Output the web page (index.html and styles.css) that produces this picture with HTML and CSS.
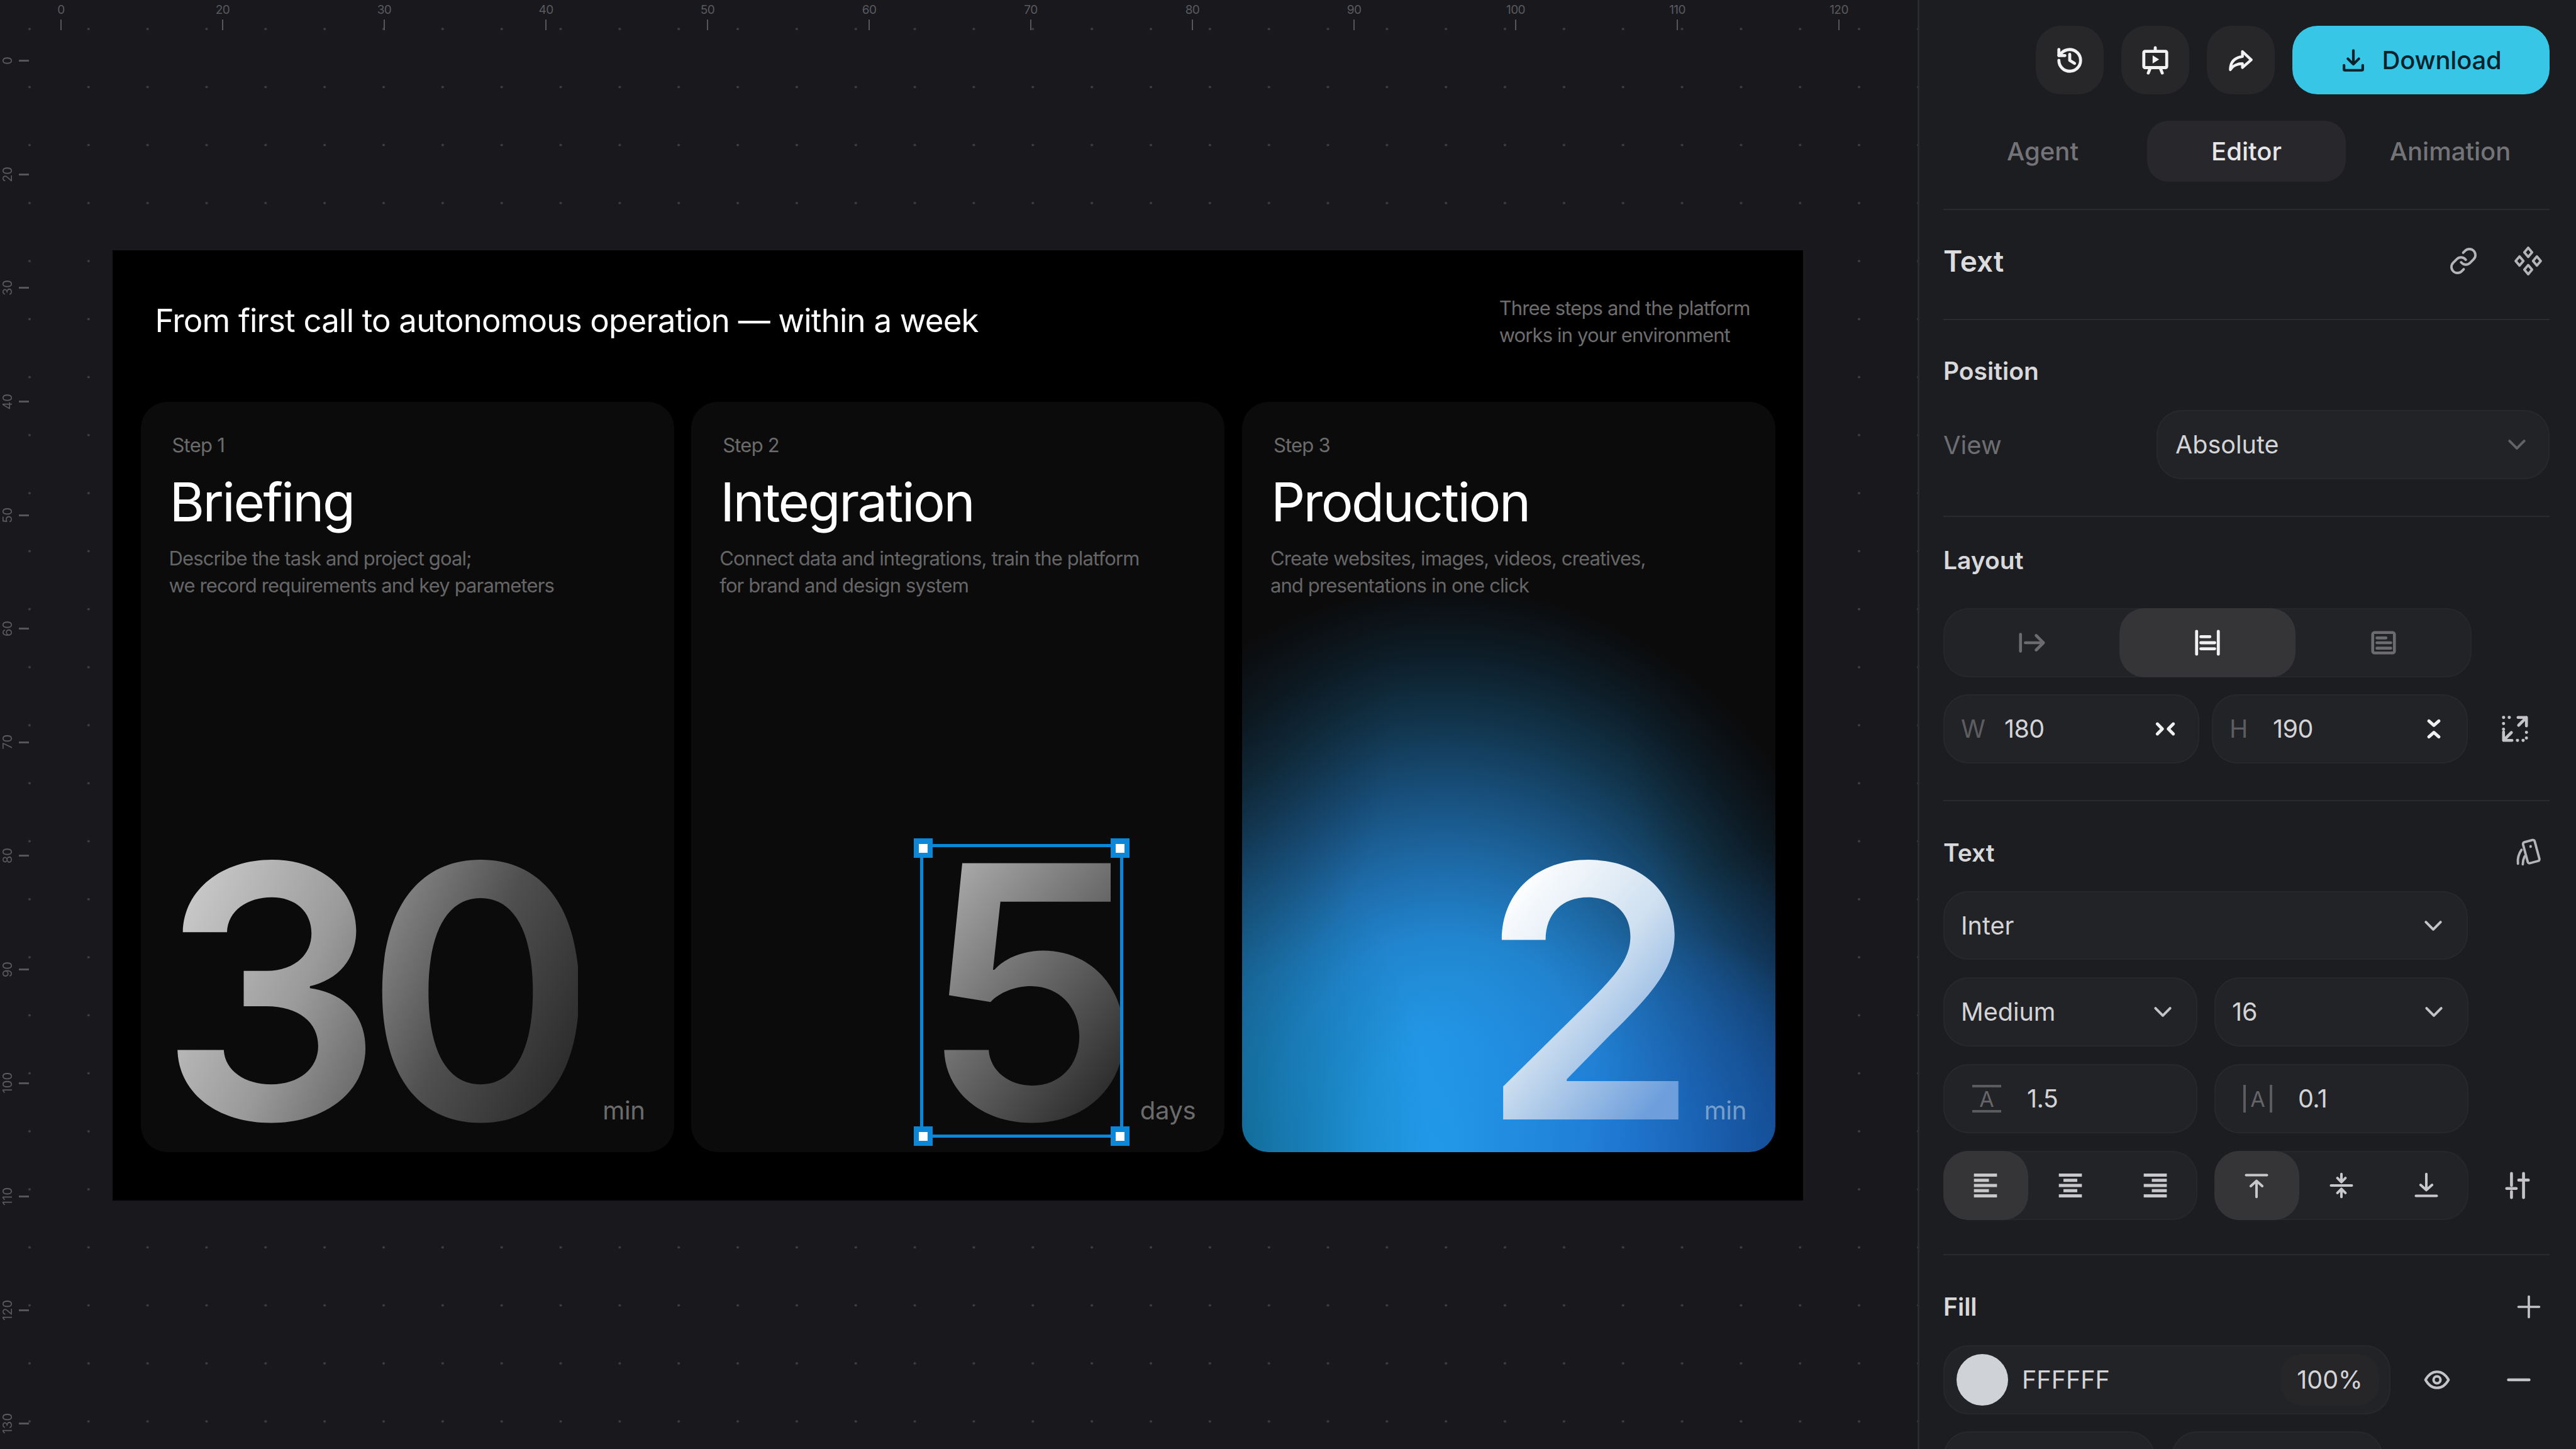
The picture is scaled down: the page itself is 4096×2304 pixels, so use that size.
FILE: index.html
```html
<!DOCTYPE html>
<html lang="en">
<head>
  <meta charset="UTF-8" />
  <title>Slide editor</title>
  <link rel="stylesheet" href="styles.css">
</head>
<body>
  <svg class="defs" width="0" height="0">
    <symbol id="chev" viewBox="0 0 24 24"><path d="M5 8.500l7 7 7-7"/></symbol>
  </svg>
  <div class="app">
    <main class="canvas">
      <div class="ruler-top">
        <span class="rt"><b>0</b><i></i></span>
        <span class="rt"><b>20</b><i></i></span>
        <span class="rt"><b>30</b><i></i></span>
        <span class="rt"><b>40</b><i></i></span>
        <span class="rt"><b>50</b><i></i></span>
        <span class="rt"><b>60</b><i></i></span>
        <span class="rt"><b>70</b><i></i></span>
        <span class="rt"><b>80</b><i></i></span>
        <span class="rt"><b>90</b><i></i></span>
        <span class="rt"><b>100</b><i></i></span>
        <span class="rt"><b>110</b><i></i></span>
        <span class="rt"><b>120</b><i></i></span>
      </div>
      <div class="ruler-left">
        <span class="rl"><b>0</b><i></i></span>
        <span class="rl"><b>20</b><i></i></span>
        <span class="rl"><b>30</b><i></i></span>
        <span class="rl"><b>40</b><i></i></span>
        <span class="rl"><b>50</b><i></i></span>
        <span class="rl"><b>60</b><i></i></span>
        <span class="rl"><b>70</b><i></i></span>
        <span class="rl"><b>80</b><i></i></span>
        <span class="rl"><b>90</b><i></i></span>
        <span class="rl"><b>100</b><i></i></span>
        <span class="rl"><b>110</b><i></i></span>
        <span class="rl"><b>120</b><i></i></span>
        <span class="rl"><b>130</b><i></i></span>
        <span class="rl"><b></b><i></i></span>
      </div>

      <section class="slide">
        <header class="slide-head">
          <h1>From first call to autonomous operation — within a week</h1>
          <p>Three steps and the platform<br>works in your environment</p>
        </header>
        <div class="cards">
          <article class="card">
            <div class="step">Step 1</div>
            <h2>Briefing</h2>
            <p class="desc">Describe the task and project goal;<br>we record requirements and key parameters</p>
            <div class="foot">
              <span class="big big-30">30</span>
              <span class="unit">min</span>
            </div>
          </article>
          <article class="card">
            <div class="step">Step 2</div>
            <h2>Integration</h2>
            <p class="desc">Connect data and integrations, train the platform<br>for brand and design system</p>
            <div class="foot">
              <span class="big big-5">5<span class="sel"><u class="h tl"></u><u class="h tr"></u><u class="h bl"></u><u class="h br"></u></span></span>
              <span class="unit">days</span>
            </div>
          </article>
          <article class="card card-blue">
            <div class="step">Step 3</div>
            <h2>Production</h2>
            <p class="desc">Create websites, images, videos, creatives,<br>and presentations in one click</p>
            <div class="foot">
              <span class="big big-2">2</span>
              <span class="unit">min</span>
            </div>
          </article>
        </div>
      </section>
    </main>

    <aside class="panel">
      <div class="topbar">
        <button class="icon-btn"><svg class="ico ico-w" viewBox="0 0 24 24"><path d="M3 12a9 9 0 1 0 9-9 9.750 9.750 0 0 0-6.740 2.740L3 8"/><path d="M3 3v5h5"/><path d="M12 7v5l4 2.500"/></svg></button>
        <button class="icon-btn"><svg class="ico ico-w" viewBox="0 0 24 24"><rect x="2.500" y="4.500" width="19" height="13.500" rx="1"/><path d="M12 1.500v3M8 18l-1.800 4.500M16 18l1.800 4.500"/><path class="solid" d="M9.800 7.800l5.400 3.400-5.400 3.400z"/></svg></button>
        <button class="icon-btn"><svg class="ico ico-w ico-sm" viewBox="0 0 24 24"><path d="M13.500 4l8 7.500-8 7V15c-5 0-8.500 1.500-11 5.500 0-7 3.500-11 11-12z"/></svg></button>
        <button class="download"><svg class="ico ico-d" viewBox="0 0 24 24"><path d="M12 3v12M7 10.500l5 5 5-5M3.500 16.500V20a1 1 0 0 0 1 1h15a1 1 0 0 0 1-1v-3.500"/></svg>Download</button>
      </div>

      <nav class="tabs">
        <span class="tab">Agent</span>
        <span class="tab active">Editor</span>
        <span class="tab">Animation</span>
      </nav>

      <section class="sec sec-title">
        <div class="sec-row">
          <h3 class="big-label">Text</h3>
          <div class="sec-icons">
            <svg class="ico ico-l" viewBox="0 0 24 24"><path d="M10 13a5 5 0 0 0 7.540.540l3-3a5 5 0 0 0-7.070-7.070l-1.720 1.710"/><path d="M14 11a5 5 0 0 0-7.540-.540l-3 3a5 5 0 0 0 7.070 7.070l1.710-1.710"/></svg>
            <svg class="ico ico-l" viewBox="0 0 24 24"><path d="M12 1l3.200 3.800L12 8.600 8.800 4.800zM12 15.400l3.200 3.800L12 23l-3.200-3.800zM4.800 8.200L8 12l-3.200 3.800L1.600 12zM19.200 8.200l3.200 3.800-3.200 3.800L16 12z"/></svg>
          </div>
        </div>
      </section>

      <section class="sec sec-pos">
        <h3 class="label">Position</h3>
        <div class="view-row">
          <span class="muted">View</span>
          <div class="pill pill-view"><span>Absolute</span><svg class="ico chev chev-dim"><use href="#chev"/></svg></div>
        </div>
      </section>

      <section class="sec sec-layout">
        <h3 class="label">Layout</h3>
        <div class="seg seg-layout">
          <span class="seg-item"><svg class="ico ico-g" viewBox="0 0 24 24"><path d="M3 5v14M7 12h15M16 6l6 6-6 6"/></svg></span>
          <span class="seg-item on"><svg class="ico ico-w" viewBox="0 0 24 24"><path d="M3 2.500v19M21 2.500v19M6.500 7H14M6.500 12H18M6.500 17H18"/></svg></span>
          <span class="seg-item"><svg class="ico ico-g" viewBox="0 0 24 24"><rect x="3" y="3.500" width="18" height="17" rx="1.500"/><path d="M6.500 8H14M6.500 12H18M6.500 16.500H18"/></svg></span>
        </div>
        <div class="row row-wh">
          <div class="pill pill-num">
            <span class="pre">W</span><span class="val">180</span>
            <svg class="ico ico-s" viewBox="0 0 24 24"><path d="M4 7l5 5-5 5M20 7l-5 5 5 5"/></svg>
          </div>
          <div class="pill pill-num">
            <span class="pre">H</span><span class="val">190</span>
            <svg class="ico ico-s" viewBox="0 0 24 24"><path d="M7 4l5 4.500 5-4.500M7 20l5-4.500 5 4.500"/></svg>
          </div>
          <svg class="ico ico-x" viewBox="0 0 24 24"><path class="dots" d="M2.500 2.500h9M2.500 7.500v7M14 21.500h7.500V13"/><path d="M14.500 2.500h7v7M21.500 2.500L15 9M9.500 21.500h-7v-7M2.500 21.500L9 15"/></svg>
        </div>
      </section>

      <section class="sec sec-text">
        <div class="sec-row">
          <h3 class="label">Text</h3>
          <svg class="ico ico-l ico-rot" viewBox="0 0 24 24"><rect x="9.500" y="2" width="10" height="18" rx="1.500" transform="rotate(-15 14.500 11)"/><path d="M14 6.500v.5"/><path d="M6.500 9.500C4 13 3 17 3.500 21M9 15c-1 2-1.500 4-1.500 6.500"/></svg>
        </div>
        <div class="pill pill-font"><span>Inter</span><svg class="ico chev"><use href="#chev"/></svg></div>
        <div class="row row-two">
          <div class="pill pill-half"><span>Medium</span><svg class="ico chev"><use href="#chev"/></svg></div>
          <div class="pill pill-half"><span>16</span><svg class="ico chev"><use href="#chev"/></svg></div>
        </div>
        <div class="row row-two">
          <div class="pill pill-half pill-metric"><span class="a a-lines">A</span><span class="val">1.5</span></div>
          <div class="pill pill-half pill-metric"><span class="a a-sides">A</span><span class="val">0.1</span></div>
        </div>
        <div class="row row-two">
          <div class="seg seg-half">
            <span class="seg-item on"><svg class="ico ico-a" viewBox="0 0 24 24"><path class="thick" d="M2 3h20M2 7.500h13M2 12h20M2 16.500h13M2 21h20"/></svg></span>
            <span class="seg-item"><svg class="ico ico-a" viewBox="0 0 24 24"><path class="thick" d="M2 3h20M6 7.500h12M2 12h20M6 16.500h12M2 21h20"/></svg></span>
            <span class="seg-item"><svg class="ico ico-a" viewBox="0 0 24 24"><path class="thick" d="M2 3h20M9 7.500h13M2 12h20M9 16.500h13M2 21h20"/></svg></span>
          </div>
          <div class="seg seg-half">
            <span class="seg-item on"><svg class="ico ico-a" viewBox="0 0 24 24"><path d="M3 3h18M12 22V8M7 12.500L12 8l5 4.500"/></svg></span>
            <span class="seg-item"><svg class="ico ico-a" viewBox="0 0 24 24"><path d="M3 12h18M12 2v6M8.500 5.500L12 9l3.500-3.500M12 22v-6M8.500 18.500L12 15l3.500 3.500"/></svg></span>
            <span class="seg-item"><svg class="ico ico-a" viewBox="0 0 24 24"><path d="M3 21h18M12 2v14M7 11.500l5 4.500 5-4.500"/></svg></span>
          </div>
          <svg class="ico ico-x ico-sl" viewBox="0 0 24 24"><path d="M7 2v10M7 17v5M3 14.500h8M17 2v4M17 9v13M13 7.500h8"/></svg>
        </div>
      </section>

      <section class="sec sec-fill">
        <div class="sec-row">
          <h3 class="label">Fill</h3>
          <svg class="ico ico-l ico-plus" viewBox="0 0 24 24"><path d="M12 3v18M3 12h18"/></svg>
        </div>
        <div class="row row-fill">
          <div class="pill pill-color">
            <span class="swatch"></span>
            <span class="hex">FFFFFF</span>
            <span class="pct">100%</span>
          </div>
          <svg class="ico ico-eye" viewBox="0 0 24 24"><path d="M2 12c2.500-4.500 6-7 10-7s7.500 2.500 10 7c-2.500 4.500-6 7-10 7s-7.500-2.500-10-7z"/><circle cx="12" cy="12" r="3"/></svg>
          <svg class="ico ico-minus" viewBox="0 0 24 24"><path d="M3 12h18"/></svg>
        </div>
        <div class="row row-next">
          <div class="pill pill-next"></div>
          <div class="pill pill-next"></div>
        </div>
      </section>
    </aside>
  </div>
</body>
</html>
```
FILE: styles.css
```css
* {
  box-sizing: border-box;
}

html,
body {
  margin: 0;
  height: 100%;
  overflow: hidden;
}

body {
  font-family: Inter, "Liberation Sans", sans-serif;
  background: #18181d;
  color: #e4e4e6;
}

h1, h2, h3, p {
  margin: 0;
  font-weight: 400;
}

.defs {
  position: absolute;
}

.app {
  display: flex;
  width: 4096px;
  height: 2304px;
}

/* canvas */
.canvas {
  position: relative;
  width: 3049px;
  height: 2304px;
  overflow: hidden;
  padding: 398px 0 0 179px;
  background-color: #18181d;
  background-image: radial-gradient(circle at center, #3f3f44 0, #3f3f44 1.6px, transparent 2.2px);
  background-size: 93.85px 92.25px;
}

.ruler-top {
  position: absolute;
  top: 0;
  left: -31.5px;
  display: flex;
}

.rt {
  width: 257px;
  display: flex;
  flex-direction: column;
  align-items: center;
  padding-top: 5px;
}

.rt b {
  font-weight: 400;
  font-size: 19px;
  line-height: 22px;
  color: #5a5b5f;
  letter-spacing: -0.03em;
}

.rt i {
  display: block;
  width: 2px;
  height: 17px;
  margin-top: 4px;
  background: #55565a;
}

.ruler-left {
  position: absolute;
  top: 6.4px;
  left: 0;
  display: flex;
  flex-direction: column;
}

.rl {
  height: 180.6px;
  width: 46px;
  display: flex;
  align-items: center;
  justify-content: flex-end;
  gap: 6px;
}

.rl b {
  font-weight: 400;
  font-size: 20px;
  color: #5a5b5f;
  writing-mode: vertical-rl;
  transform: rotate(180deg);
}

.rl i {
  display: block;
  width: 16px;
  height: 3px;
  background: #55565a;
}

.slide {
  width: 2688px;
  height: 1511px;
  background: #000;
  padding: 0 44.5px;
}

.slide-head {
  height: 241px;
  padding: 0 40px 19px 23px;
  display: flex;
  justify-content: space-between;
  align-items: center;
}

.slide-head h1 {
  font-size: 51px;
  font-weight: 400;
  letter-spacing: -0.016em;
  color: #fff;
}

.slide-head p {
  font-size: 31px;
  line-height: 43px;
  letter-spacing: -0.028em;
  color: #6d6d6d;
  margin-top: 4px;
}

.cards {
  display: grid;
  grid-template-columns: repeat(3, 848px);
  gap: 27.7px;
}

.card {
  height: 1193px;
  border-radius: 42px;
  background-color: #0b0b0c;
  padding: 48px 46px 23px 45px;
  display: flex;
  flex-direction: column;
}

.card-blue {
  background-image:
    radial-gradient(ellipse 240px 420px at 0% 42%, rgba(11, 11, 12, 0.3), transparent),
    radial-gradient(ellipse 240px 420px at 100% 42%, rgba(11, 11, 12, 0.3), transparent),
    radial-gradient(ellipse 300px 520px at 0% 100%, rgba(8, 100, 125, 0.55), transparent),
    radial-gradient(ellipse 300px 480px at 100% 100%, rgba(20, 80, 170, 0.6), transparent),
    radial-gradient(ellipse 420px 360px at 72% 100%, rgba(32, 120, 215, 0.75), transparent),
    radial-gradient(ellipse 720px 900px at 38% 100%, #22a2ee 0%, #2298e6 20%, #2185cf 38%, #1d68a4 52%, #174c76 65%, #113349 77%, #0d1d28 88%, #0b0b0c 100%);
}

.step {
  font-size: 31px;
  line-height: 42px;
  letter-spacing: -0.025em;
  color: #6b6b6b;
  margin-left: 5px;
}

.card h2 {
  font-size: 85px;
  line-height: 104px;
  letter-spacing: -0.03em;
  color: #fff;
  margin: 18px 0 0 1px;
}

.desc {
  font-size: 31px;
  line-height: 43px;
  letter-spacing: -0.028em;
  color: #666;
  margin-top: 15px;
}

.foot {
  margin-top: auto;
  display: flex;
  justify-content: flex-end;
  align-items: baseline;
  gap: 27px;
}

.big {
  position: relative;
  display: inline-block;
  font-size: 560px;
  font-weight: 570;
  line-height: 0.83;
  letter-spacing: -0.053em;
  color: transparent;
  -webkit-background-clip: text;
  background-clip: text;
}

.big-30 {
  margin-right: 12px;
  background-image: linear-gradient(115deg, #d8d8d8 0%, #9a9a9a 38%, #4f4f4f 68%, #222 100%);
}

.big-5 {
  background-image: linear-gradient(130deg, #b5b5b5 5%, #6a6a6a 50%, #222 95%);
}

.big-2 {
  margin-right: 10px;
  background-image: linear-gradient(130deg, #fff 15%, #cfe0f0 50%, #6e9fdc 88%);
}

.unit {
  font-size: 40px;
  letter-spacing: -0.01em;
  color: #6b6b6b;
}

.card-blue .unit {
  color: rgba(255, 255, 255, 0.42);
}

/* selection frame */
.sel {
  position: absolute;
  inset: -2px 0 0;
  border: 5px solid #0b87d9;
}

.h {
  position: absolute;
  width: 30px;
  height: 31px;
  background: #0b87d9;
}

.h::after {
  content: "";
  position: absolute;
  left: 8px;
  top: 9px;
  width: 14px;
  height: 14px;
  background: #fff;
}

.tl { left: -15px; top: -14px; }
.tr { right: -15px; top: -14px; }
.bl { left: -15px; bottom: -18px; }
.br { right: -15px; bottom: -18px; }

/* side panel */
.panel {
  width: 1047px;
  height: 2304px;
  overflow: hidden;
  background: #1c1d21;
  border-left: 3px solid #2a2b2f;
  padding: 41px 42px 0 38px;
}

.topbar {
  display: flex;
  justify-content: flex-end;
  gap: 28px;
  height: 109px;
}

.icon-btn {
  width: 108px;
  height: 109px;
  border: 0;
  border-radius: 40px;
  background: #27272a;
  display: flex;
  align-items: center;
  justify-content: center;
  padding: 0;
}

.download {
  width: 409px;
  height: 109px;
  border: 0;
  border-radius: 40px;
  background: #38c6e6;
  display: flex;
  align-items: center;
  justify-content: center;
  gap: 24px;
  font: 500 40px Inter, sans-serif;
  letter-spacing: -0.005em;
  color: #08222c;
  padding: 0;
}

.ico {
  display: block;
  flex: none;
  fill: none;
  stroke: currentColor;
  stroke-width: 2;
  stroke-linecap: round;
  stroke-linejoin: round;
}

.ico-w {
  width: 46px;
  height: 46px;
  color: #f1f1f2;
  stroke-width: 2.5;
}

.ico-w .solid {
  fill: currentColor;
  stroke: none;
}

.ico-sm {
  width: 42px;
  height: 42px;
}

.ico-d {
  width: 42px;
  height: 42px;
  color: #08222c;
  stroke-width: 2.4;
}

.tabs {
  display: grid;
  grid-template-columns: repeat(3, 316px);
  gap: 8px;
  margin-top: 42px;
}

.tab {
  height: 97px;
  border-radius: 34px;
  display: flex;
  align-items: center;
  justify-content: center;
  font-size: 40px;
  font-weight: 500;
  color: #747478;
}

.tab.active {
  background: #28282c;
  color: #e6e6e8;
}

.sec {
  border-top: 2px solid #2a2b2f;
}

.sec-title {
  margin-top: 43px;
  height: 175px;
}

.sec-title .sec-row {
  height: 162px;
}

.sec-row {
  display: flex;
  align-items: center;
  justify-content: space-between;
  padding-right: 11px;
}

.big-label {
  font-size: 46px;
  font-weight: 600;
  color: #dcdcde;
}

.sec-icons {
  display: flex;
  gap: 57px;
}

.ico-l {
  width: 46px;
  height: 46px;
  color: #b5b5b8;
}

.label {
  font-size: 39px;
  font-weight: 600;
  line-height: 48px;
  color: #d8d8da;
}

.sec-pos {
  height: 313px;
  padding-top: 57px;
}

.view-row {
  display: flex;
  justify-content: space-between;
  align-items: center;
  margin-top: 38px;
}

.muted {
  font-size: 40px;
  color: #6e6e72;
}

.pill {
  height: 110px;
  border-radius: 40px;
  background: #222326;
  box-shadow: inset 0 0 0 2px #27282b;
  display: flex;
  align-items: center;
  justify-content: space-between;
  font-size: 39.5px;
  color: #d4d4d6;
  flex: none;
}

.pill-view {
  width: 625px;
  padding: 0 32px 0 30px;
}

.chev {
  width: 40px;
  height: 40px;
  stroke-width: 2.4;
  color: #c4c4c6;
}

.chev-dim {
  color: #636367;
}

.sec-layout {
  height: 452px;
  padding-top: 45px;
}

.seg {
  display: grid;
  grid-template-columns: repeat(3, 1fr);
  height: 110px;
  border-radius: 40px;
  background: #222326;
  box-shadow: inset 0 0 0 2px #26272a;
  flex: none;
}

.seg-layout {
  width: 840px;
  margin-top: 52px;
}

.seg-item {
  display: flex;
  align-items: center;
  justify-content: center;
  border-radius: 40px;
}

.seg-item.on {
  background: #353538;
}

.ico-g {
  width: 46px;
  height: 46px;
  color: #6c6c70;
  stroke-width: 2.4;
}

.row {
  display: flex;
  align-items: center;
}

.row-wh {
  margin-top: 27px;
  gap: 20px;
}

.pill-num {
  width: 407px;
  padding: 0 35px 0 28px;
  justify-content: flex-start;
}

.pre {
  width: 69px;
  color: #5d5d61;
}

.val {
  color: #d4d4d6;
  letter-spacing: -0.015em;
}

.ico-s {
  width: 38px;
  height: 38px;
  margin-left: auto;
  stroke-width: 3.2;
  color: #f0f0f1;
}

.ico-x {
  width: 46px;
  height: 46px;
  color: #c4c4c6;
  margin-left: 32px;
  stroke-width: 2.4;
}

.ico-x .dots {
  stroke-dasharray: 0.1 4.6;
  stroke-width: 2.6;
}

.sec-text {
  height: 722px;
  padding-top: 58px;
}

.pill-font {
  width: 834px;
  margin-top: 37px;
  padding: 0 35px 0 28px;
}

.sec-text .sec-row + .pill-font {
  height: 109px;
}

.row-two {
  margin-top: 28px;
  gap: 27px;
}

.pill-half {
  width: 404px;
  padding: 0 35px 0 28px;
}

.pill-metric {
  justify-content: flex-start;
  padding-left: 46px;
}

.a {
  display: flex;
  align-items: center;
  justify-content: center;
  width: 46px;
  height: 44px;
  margin-right: 41px;
  font-size: 34px;
  color: #66666a;
}

.a-lines {
  border-top: 4px solid #5c5c60;
  border-bottom: 4px solid #5c5c60;
}

.a-sides {
  border-left: 4px solid #5c5c60;
  border-right: 4px solid #5c5c60;
}

.seg-half {
  width: 404px;
}

.ico-a {
  width: 44px;
  height: 44px;
  color: #c8c8ca;
  stroke-width: 2.2;
}

.ico-a .thick {
  stroke-width: 2.6;
  stroke-linecap: butt;
}

.ico-sl {
  margin-left: 28px;
}

.sec-fill {
  padding-top: 58px;
}

.row-fill {
  margin-top: 37px;
}

.pill-color {
  width: 711px;
  padding: 0 18px 0 21px;
  justify-content: flex-start;
}

.swatch {
  width: 82px;
  height: 82px;
  border-radius: 50%;
  background: #cfd2d6;
}

.hex {
  margin-left: 22px;
}

.pct {
  margin-left: auto;
  width: 157px;
  height: 82px;
  border-radius: 34px;
  background: #262629;
  display: flex;
  align-items: center;
  justify-content: center;
}

.ico-eye {
  width: 44px;
  height: 44px;
  margin-left: 52px;
  color: #c4c4c6;
  stroke-width: 2.2;
}

.ico-minus {
  width: 44px;
  height: 44px;
  margin-left: 86px;
  color: #c4c4c6;
  stroke-width: 2.4;
}

.ico-plus {
  stroke-width: 2;
  color: #c4c4c6;
  width: 44px;
  height: 44px;
}

.row-next {
  margin-top: 27px;
  gap: 27px;
}

.pill-next {
  width: 336px;
}
```
